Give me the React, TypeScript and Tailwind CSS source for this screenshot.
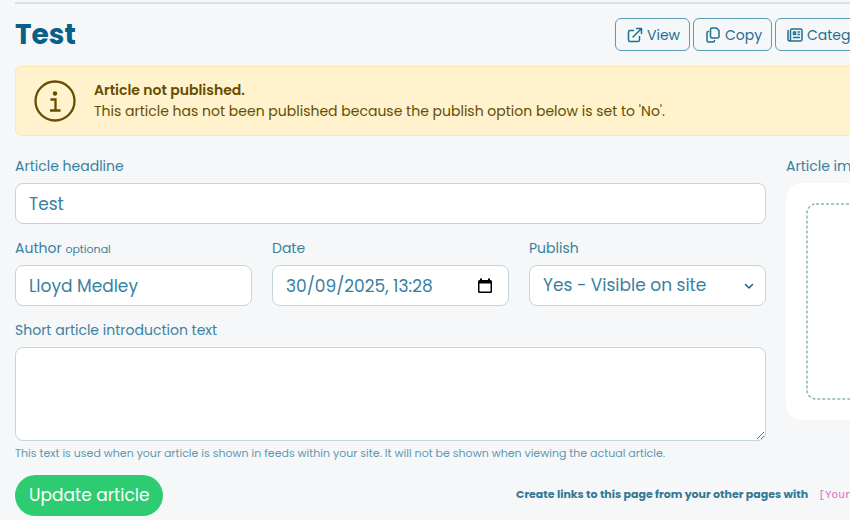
import { useState } from "react";
import type { ReactNode } from "react";

const FIELD =
  "w-full rounded-lg border border-[#c3d5db] bg-white px-[13px] text-[17px] text-[#3981a0] outline-none focus:border-[#3981a0]";

export default function App() {
  const [headline, setHeadline] = useState("Test");
  const [author, setAuthor] = useState("Lloyd Medley");
  const [date, setDate] = useState("30/09/2025, 13:28");
  const [publish, setPublish] = useState("yes");
  const [intro, setIntro] = useState("");

  return (
    <main className="min-h-screen overflow-hidden bg-[#f5f7f9] pt-0.5 pl-[15px] font-['Poppins','Inter',sans-serif] text-sm text-[#3981a0]">
      <header className="flex items-center border-t-2 border-[#d8e1e8] pt-[14px]">
        <h1 className="flex-1 text-[28px] leading-8 font-bold text-[#086088]">
          Test
        </h1>
        <nav className="flex w-[235px] gap-[3px]">
          <ActionButton label="View" width="w-[75px]">
            <path d="M6.500 3.500H3A1.500 1.500 0 0 0 1.500 5v8A1.500 1.500 0 0 0 3 14.500h8a1.500 1.500 0 0 0 1.500-1.500V9.500M9.500 1.500h5v5M14.500 1.500 6 10" />
          </ActionButton>
          <ActionButton label="Copy" width="w-[79px]">
            <path d="M7 1h4.500L14 3.500V9.500A1.500 1.500 0 0 1 12.500 11H7a1.500 1.500 0 0 1-1.500-1.500v-7A1.500 1.500 0 0 1 7 1ZM3.500 4.500A1.500 1.500 0 0 0 2 6v7.500A1.500 1.500 0 0 0 3.500 15H8a1.500 1.500 0 0 0 1.500-1.500" />
          </ActionButton>
          <ActionButton label="Categories" width="w-[120px]">
            <path d="M5 2h8.500A1.500 1.500 0 0 1 15 3.500v9a1.500 1.500 0 0 1-1.500 1.500h-11A1.500 1.500 0 0 1 1 12.500V3.500M5 2a1.500 1.500 0 0 0-1.500 1.500v9A1.500 1.500 0 0 1 2.500 14M6.500 5h2v2.500h-2zM11 5h1.500M11 7.500h1.500M6.500 10.500h6" />
          </ActionButton>
        </nav>
      </header>

      <div
        role="status"
        className="mt-[15px] -mr-4 flex h-[70px] items-center gap-[18px] rounded-md border border-[#ffe8a6] bg-[#fff2cd] pl-[18px] text-[#664d03]"
      >
        <svg
          viewBox="0 0 42 42"
          className="size-[42px] shrink-0"
          fill="none"
          stroke="currentColor"
          strokeWidth="2.300"
          aria-hidden="true"
        >
          <circle cx="21" cy="21" r="19.500" />
          <path d="M16.500 19.500H21.500V30M16 30.500h10.500" />
          <circle cx="21" cy="13.500" r="2.200" fill="currentColor" stroke="none" />
        </svg>
        <div className="leading-[21px] whitespace-nowrap">
          <strong className="block font-semibold">Article not published.</strong>
          <p>
            This article has not been published because the publish option below
            is set to 'No'.
          </p>
        </div>
      </div>

      <form
        onSubmit={(e) => e.preventDefault()}
        className="mt-5 grid grid-cols-[minmax(0,1fr)_64px] gap-x-5"
      >
        <div className="flex flex-col gap-[14px]">
          <Field id="headline" label="Article headline">
            <input
              id="headline"
              value={headline}
              onChange={(e) => setHeadline(e.target.value)}
              className={`${FIELD} h-[41px]`}
            />
          </Field>

          <div className="grid grid-cols-3 gap-5">
            <Field id="author" label="Author" note="optional">
              <input
                id="author"
                value={author}
                onChange={(e) => setAuthor(e.target.value)}
                className={`${FIELD} h-[41px]`}
              />
            </Field>
            <Field id="date" label="Date">
              <div className="relative">
                <input
                  id="date"
                  value={date}
                  onChange={(e) => setDate(e.target.value)}
                  className={`${FIELD} h-[41px]`}
                />
                <button
                  type="button"
                  aria-label="Open calendar"
                  className="absolute inset-y-0 right-4 text-black"
                >
                  <svg viewBox="0 0 16 16" className="size-4" aria-hidden="true">
                    <path
                      fill="currentColor"
                      fillRule="evenodd"
                      d="M3 .500h2V2h6V.500h2V2h.500A1.500 1.500 0 0 1 15 3.500v10a1.500 1.500 0 0 1-1.500 1.500h-11A1.500 1.500 0 0 1 1 13.500v-10A1.500 1.500 0 0 1 2.500 2H3ZM2.500 5.500v8h11v-8Z"
                    />
                  </svg>
                </button>
              </div>
            </Field>
            <Field id="publish" label="Publish">
              <div className="relative">
                <select
                  id="publish"
                  value={publish}
                  onChange={(e) => setPublish(e.target.value)}
                  className={`${FIELD} h-[41px] appearance-none`}
                >
                  <option value="yes">Yes - Visible on site</option>
                  <option value="no">No</option>
                </select>
                <svg
                  viewBox="0 0 10 10"
                  className="pointer-events-none absolute inset-y-0 right-3 my-auto size-[10px] text-[#1f5f7d]"
                  fill="none"
                  stroke="currentColor"
                  strokeWidth="1.500"
                  strokeLinecap="round"
                  strokeLinejoin="round"
                  aria-hidden="true"
                >
                  <path d="m1.500 3.500 3.500 3.500 3.500-3.500" />
                </svg>
              </div>
            </Field>
          </div>

          <Field id="intro" label="Short article introduction text">
            <textarea
              id="intro"
              value={intro}
              onChange={(e) => setIntro(e.target.value)}
              className={`${FIELD} block h-[94px] resize-y py-2`}
            />
            <p className="mt-[3px] text-[11px] leading-[18px] text-[#5f98b0]">
              This text is used when your article is shown in feeds within your
              site. It will not be shown when viewing the actual article.
            </p>
          </Field>
        </div>

        <aside className="whitespace-nowrap">
          <h2 className="mb-[7px] leading-5">Article image</h2>
          <div className="h-[237px] w-[280px] rounded-2xl bg-white p-5">
            <DropZone />
          </div>
        </aside>

        <div className="col-span-2 mt-[13px] flex items-center justify-between">
          <button
            type="submit"
            className="h-[41px] rounded-full bg-[#2dcc70] px-[14px] text-[17px] text-white"
          >
            Update article
          </button>
          <p className="w-[334px] text-[11px] font-bold whitespace-nowrap text-[#327896]">
            Create links to this page from your other pages with{" "}
            <code className="ml-2 font-['Liberation_Mono',monospace] font-normal text-[#e069bd]">
              [Your link text]
            </code>
          </p>
        </div>
      </form>
    </main>
  );
}

function Field({
  id,
  label,
  note,
  children,
}: {
  id: string;
  label: string;
  note?: string;
  children: ReactNode;
}) {
  return (
    <div>
      <label htmlFor={id} className="mb-[7px] block h-5 leading-5">
        {label} {note && <small className="text-[11px]">{note}</small>}
      </label>
      {children}
    </div>
  );
}

function ActionButton({
  label,
  width,
  children,
}: {
  label: string;
  width: string;
  children: ReactNode;
}) {
  return (
    <button
      type="button"
      className={`flex h-[33px] shrink-0 items-center gap-1 rounded-md border border-[#5b9bb5] pl-[11px] text-[#1f6f93] ${width}`}
    >
      <svg
        viewBox="0 0 16 16"
        className="size-4 shrink-0"
        fill="none"
        stroke="currentColor"
        strokeWidth="1.500"
        strokeLinejoin="round"
        strokeLinecap="round"
        aria-hidden="true"
      >
        {children}
      </svg>
      {label}
    </button>
  );
}

function DropZone() {
  return (
    <svg className="size-full overflow-visible" aria-hidden="true">
      <rect
        x="1"
        y="1"
        width="99%"
        height="99%"
        rx="9"
        fill="none"
        stroke="#8fb3bf"
        strokeWidth="1.500"
        strokeDasharray="3 2"
      />
    </svg>
  );
}
